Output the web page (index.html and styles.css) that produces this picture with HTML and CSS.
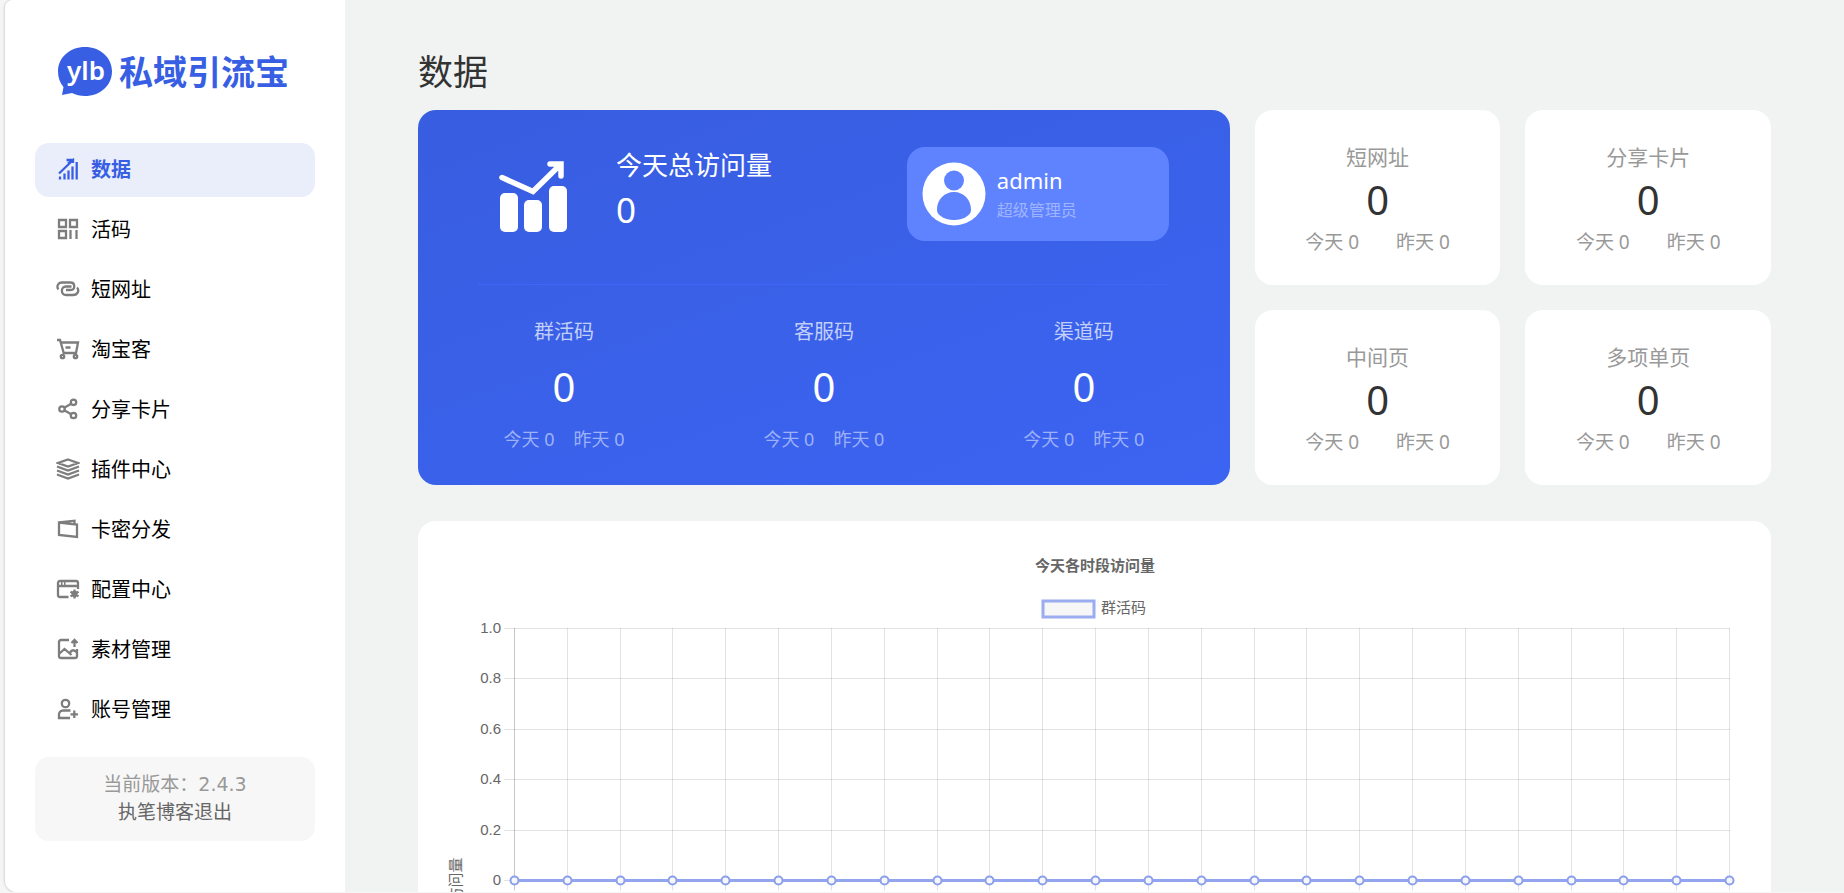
FILE: index.html
```html
<!DOCTYPE html>
<html lang="zh-CN">
<head>
<meta charset="utf-8">
<title>数据</title>
<link rel="stylesheet" href="styles.css">
</head>
<body>
<div class="app">
  <aside class="sidebar">
    <a class="logo" href="#">
      <svg class="logo-mark" viewBox="0 0 54 50" aria-hidden="true">
        <path d="M27 0C42 0 54 10.500 54 24.500S42 49 27 49c-5 0-9-1-13-3L4 48l1.500-8C2 36 0 30.500 0 24.500 0 10.500 12 0 27 0z" fill="#385fe3"/>
        <text class="logo-ylb" x="28" y="33" text-anchor="middle">ylb</text>
      </svg>
      <span class="logo-name">私域引流宝</span>
    </a>
    <nav class="menu">
      <a class="menu-item active" href="#"><svg class="icon" viewBox="0 0 24 24"><path d="M4 18.500V21.500M8.500 15.500V21.500M12.500 12.500V21.500M16.500 8.500V21.500M20.700 4V21.500M3 15.500L17 2M10.500 2H17.500M12 5.500L17 2v3"/></svg>数据</a>
      <a class="menu-item" href="#"><svg class="icon" viewBox="0 0 24 24"><path d="M3 2h7v7H3zM14 2h7v7h-7zM3 13h7v7H3zM14.500 12v9M20.500 12v9"/></svg>活码</a>
      <a class="menu-item" href="#"><svg class="icon" viewBox="0 0 24 24"><path d="M2.200 11.500C0 7 3 4.500 6 4.500h8.500c5 0 5 7.500 0 7.500H10M15.500 8.500H10c-5.500 0-5.500 8.500 0 8.500h7c5 0 6.500-5 4-7.500"/></svg>短网址</a>
      <a class="menu-item" href="#"><svg class="icon" viewBox="0 0 24 24"><path d="M1 2h3l4 14M4 4.500h18L20 15H8M9.500 9.500h5"/><circle cx="6.500" cy="18.500" r="1.700"/><circle cx="19.500" cy="18.500" r="1.700"/></svg>淘宝客</a>
      <a class="menu-item" href="#"><svg class="icon" viewBox="0 0 24 24"><circle cx="17.500" cy="4.300" r="2.700"/><circle cx="6" cy="11" r="2.700"/><circle cx="17.500" cy="17.500" r="2.700"/><path d="M8.200 9.700l7-4M8.200 12.300l7 4"/></svg>分享卡片</a>
      <a class="menu-item" href="#"><svg class="icon" viewBox="0 0 24 24"><path d="M12 1.500L22 5 12 8.500 2 5zM1 8.500l11 4 11-4M1 12.500l11 4 11-4M1 16.500l11 4 11-4"/></svg>插件中心</a>
      <a class="menu-item" href="#"><svg class="icon" viewBox="0 0 24 24"><path d="M3 4.500L21 6.500V19L3 17zM3 4.500L18.500 2.700V6"/></svg>卡密分发</a>
      <a class="menu-item" href="#"><svg class="icon" viewBox="0 0 24 24"><path d="M12.500 19H4a2 2 0 0 1-2-2V5a2 2 0 0 1 2-2h16a2 2 0 0 1 2 2v6M2 8h20M5 5.500h1.500M8 5.500h1.500M18.500 11.500v9M14.500 13.700l8 4.600M22.500 13.700l-8 4.600"/><circle cx="18.500" cy="16" r="2"/></svg>配置中心</a>
      <a class="menu-item" href="#"><svg class="icon" viewBox="0 0 24 24"><path d="M13 2H5a2 2 0 0 0-2 2v14a2 2 0 0 0 2 2h14a2 2 0 0 0 2-2v-7M3 16l5.500-5 7 6M14 14.500c2-3 4-3 7 0M18.500 9V2M15.500 5l3-3 3 3"/></svg>素材管理</a>
      <a class="menu-item" href="#"><svg class="icon" viewBox="0 0 24 24"><circle cx="9.500" cy="5.500" r="3.700"/><path d="M14.500 12.500H7a4 4 0 0 0-4 4V20h11M18.300 12.500v7.500M14.500 16.300h7.500"/></svg>账号管理</a>
    </nav>
    <div class="version">
      <span>当前版本：<span class="version-number">2.4.3</span></span>
      <a class="logout" href="#">执笔博客退出</a>
    </div>
  </aside>
  <main class="main">
    <h1 class="page-title">数据</h1>
    <div class="overview">
      <section class="total">
        <div class="total-head">
          <svg class="total-icon" viewBox="0 0 68 72" aria-hidden="true"><g fill="#fff"><rect x="1" y="32" width="18" height="39" rx="5"/><rect x="25" y="39" width="18" height="32" rx="5"/><rect x="50" y="25" width="18" height="46" rx="5"/></g><path d="M3 16.500L34 30.500 61 4M51 3h11v12" fill="none" stroke="#fff" stroke-width="5.500" stroke-linecap="round"/></svg>
          <div class="total-text"><h2 class="total-title">今天总访问量</h2><strong class="total-value">0</strong></div>
          <div class="profile">
            <svg class="avatar" viewBox="0 0 64 64" aria-hidden="true"><circle cx="32" cy="32" r="31.500" fill="#fff"/><circle cx="32" cy="18.500" r="10" fill="#5f83ff"/><path d="M32 30c10 0 17 8 17 17.500 0 3-1 4.500-3 6C42 57 37 58 32 58s-10-1-14-4.500c-2-1.500-3-3-3-6C15 38 22 30 32 30z" fill="#5f83ff"/></svg>
            <div class="profile-text"><span class="profile-name">admin</span><span class="profile-role">超级管理员</span></div>
          </div>
        </div>
        <div class="codes">
          <div class="code"><h3 class="code-title">群活码</h3><strong class="number">0</strong><p class="code-days"><span>今天 0</span><span>昨天 0</span></p></div>
          <div class="code"><h3 class="code-title">客服码</h3><strong class="number">0</strong><p class="code-days"><span>今天 0</span><span>昨天 0</span></p></div>
          <div class="code"><h3 class="code-title">渠道码</h3><strong class="number">0</strong><p class="code-days"><span>今天 0</span><span>昨天 0</span></p></div>
        </div>
      </section>
      <section class="stats">
        <div class="stat"><h3 class="stat-title">短网址</h3><strong class="number">0</strong><p class="stat-days"><span>今天 0</span><span>昨天 0</span></p></div>
        <div class="stat"><h3 class="stat-title">分享卡片</h3><strong class="number">0</strong><p class="stat-days"><span>今天 0</span><span>昨天 0</span></p></div>
        <div class="stat"><h3 class="stat-title">中间页</h3><strong class="number">0</strong><p class="stat-days"><span>今天 0</span><span>昨天 0</span></p></div>
        <div class="stat"><h3 class="stat-title">多项单页</h3><strong class="number">0</strong><p class="stat-days"><span>今天 0</span><span>昨天 0</span></p></div>
      </section>
    </div>
    <section class="chart-card">
      <svg class="chart" id="chart" viewBox="0 0 1353 460" role="img" aria-label="今天各时段访问量">
        <text class="chart-title" x="677" y="50" text-anchor="middle">今天各时段访问量</text>
        <rect class="legend-box" x="625" y="80" width="51" height="16"/>
        <text class="chart-text" x="683" y="92">群活码</text>
        <text class="chart-text" text-anchor="middle" transform="translate(43 359) rotate(-90)">访问量</text>
      </svg>
    </section>
  </main>
</div>
<script src="chart.js"></script>
</body>
</html>
```
FILE: styles.css
```css
* { box-sizing: border-box; }

body {
  margin: 0;
  background: #f5f5f5;
  color: #333;
  font-family: "Noto Sans", "Noto Sans CJK SC", sans-serif;
  overflow: hidden;
}

h1, h2, h3, p { margin: 0; font-weight: 400; }
strong { font-weight: 400; }
a { text-decoration: none; color: inherit; }

.app {
  display: flex;
  height: calc(100vh - 1px);
  margin-left: 5px;
  overflow: hidden;
  background: #f1f3f3;
  border-bottom-left-radius: 12px;
  border-top-left-radius: 8px;
  box-shadow: 0 0 2px 1px #d4d4d4;
}

.sidebar {
  flex: 0 0 340px;
  display: flex;
  flex-direction: column;
  padding: 47px 30px 0;
  background: #fff;
}

.logo {
  display: flex;
  align-items: center;
  gap: 7px;
  height: 50px;
  margin: 0 0 46px 23px;
  color: #385fe3;
}

.logo-mark { width: 54px; height: 50px; }

.logo-ylb {
  fill: #fff;
  font: 600 26px "Noto Sans", sans-serif;
}

.logo-name {
  font-size: 34px;
  line-height: 50px;
  font-weight: 700;
  white-space: nowrap;
}

.menu { display: flex; flex-direction: column; gap: 6px; }

.menu-item {
  display: flex;
  align-items: center;
  gap: 11px;
  height: 54px;
  padding-left: 21px;
  border-radius: 14px;
  color: #000;
  font-size: 20px;
  line-height: 30px;
}

.menu-item.active {
  background: #eaeefb;
  color: #385fe3;
  font-weight: 700;
}

.icon {
  width: 24px;
  height: 24px;
  fill: none;
  stroke: #7d7d7d;
  stroke-width: 2.3;
}

.active .icon { stroke: #385fe3; }

.version {
  display: flex;
  flex-direction: column;
  align-items: center;
  margin-top: 20px;
  padding: 13px 0 15px;
  border-radius: 14px;
  background: #f7f7f7;
  color: #999;
  font-size: 19px;
  line-height: 28px;
}

.version-number { font-family: "DejaVu Sans", sans-serif; }
.logout { color: #666; }

.main {
  flex: 1;
  min-width: 0;
  padding: 46px 73px 0;
  overflow: hidden;
}

.page-title {
  font-size: 35px;
  line-height: 52px;
  margin-bottom: 12px;
}

.overview {
  display: grid;
  grid-template-columns: 3fr 2fr;
}

.total {
  padding: 37px 16px 0;
  border-radius: 18px;
  background: linear-gradient(160deg, #385de0, #3c64f2);
  color: #fff;
}

.total-head {
  display: flex;
  align-items: flex-start;
  height: 138px;
  margin: 0 45px 0 44px;
  border-bottom: 1px solid #4066f8;
}

.total-icon { width: 68px; height: 72px; margin: 14px 49px 0 21px; }
.total-text { display: flex; flex-direction: column; flex: 1; }
.total-title { font-size: 26px; line-height: 36px; }
.total-value { font-size: 35px; line-height: 54px; }

.profile {
  display: flex;
  align-items: center;
  gap: 11px;
  width: 262px;
  height: 94px;
  padding-left: 15px;
  border-radius: 18px;
  background: #5f83ff;
}

.avatar { width: 64px; height: 64px; }
.profile-text { display: flex; flex-direction: column; }
.profile-name { font-size: 22px; line-height: 32px; }
.profile-role { font-size: 16px; line-height: 28px; color: #9fb4ff; }

.codes {
  display: grid;
  grid-template-columns: repeat(3, 1fr);
  padding-top: 32px;
  text-align: center;
}

.code-title { font-size: 20px; line-height: 30px; color: #c3cffb; }

.number {
  display: block;
  font-size: 40px;
  line-height: 50px;
}

.code .number { padding: 15px 0 13px; }

.code-days {
  display: flex;
  justify-content: center;
  gap: 19px;
  color: #9db1f8;
  font-size: 18px;
  line-height: 28px;
}

.stats {
  display: grid;
  grid-template-columns: 1fr 1fr;
  gap: 25px;
  padding-left: 25px;
}

.stat {
  height: 175px;
  padding-top: 32px;
  border-radius: 18px;
  background: #fff;
  text-align: center;
}

.stat-title { font-size: 21px; line-height: 30px; color: #999; }
.stat .number { margin: 3px 0; }

.stat-days {
  display: flex;
  justify-content: center;
  gap: 37px;
  color: #999;
  font-size: 19px;
  line-height: 28px;
}

.chart-card {
  margin-top: 36px;
  border-radius: 18px;
  background: #fff;
}

.chart { display: block; width: 100%; }

.chart text {
  fill: #666;
  font-family: "Liberation Sans", "Noto Sans CJK SC", sans-serif;
  font-size: 15px;
}

.chart .chart-title { font-weight: 700; }
.legend-box { fill: #f7f7f7; stroke: #9bacf0; stroke-width: 3; }
.grid-line { stroke: #000; stroke-opacity: 0.11; stroke-width: 1; }
.axis-line { stroke: #000; stroke-opacity: 0.22; stroke-width: 1; }
.series-line { stroke: #93a5ee; stroke-width: 3; }
.point { fill: #f7f7f7; stroke: #8c9fed; stroke-width: 2; }
```
FILE: chart.js
```js
const svg = document.getElementById("chart");
const left = 96;
const right = 1311;
const top0 = 107;
const rowStep = 50.5;
const hours = 24;

function add(name, attrs, text) {
  const el = document.createElementNS("http://www.w3.org/2000/svg", name);
  for (const key in attrs) el.setAttribute(key, attrs[key]);
  if (text) el.textContent = text;
  svg.appendChild(el);
}

const zeroY = Math.floor(top0 + rowStep * 5) + 0.5;

["1.0", "0.8", "0.6", "0.4", "0.2", "0"].forEach((label, i) => {
  const y = Math.floor(top0 + rowStep * i) + 0.5;
  add("line", { class: "grid-line", x1: left - 10, x2: right + 1, y1: y, y2: y });
  add("text", { x: left - 13, y: y + 4, "text-anchor": "end" }, label);
});

const xs = [];
for (let i = 0; i < hours; i++) {
  const x = Math.round(left + ((right - left) / (hours - 1)) * i) + 0.5;
  xs.push(x);
  add("line", { class: i ? "grid-line" : "axis-line", x1: x, x2: x, y1: top0, y2: zeroY + 10 });
}

add("line", { class: "series-line", x1: xs[0], x2: xs[hours - 1], y1: zeroY, y2: zeroY });
xs.forEach(x => add("circle", { class: "point", cx: x, cy: zeroY, r: 4 }));
```
